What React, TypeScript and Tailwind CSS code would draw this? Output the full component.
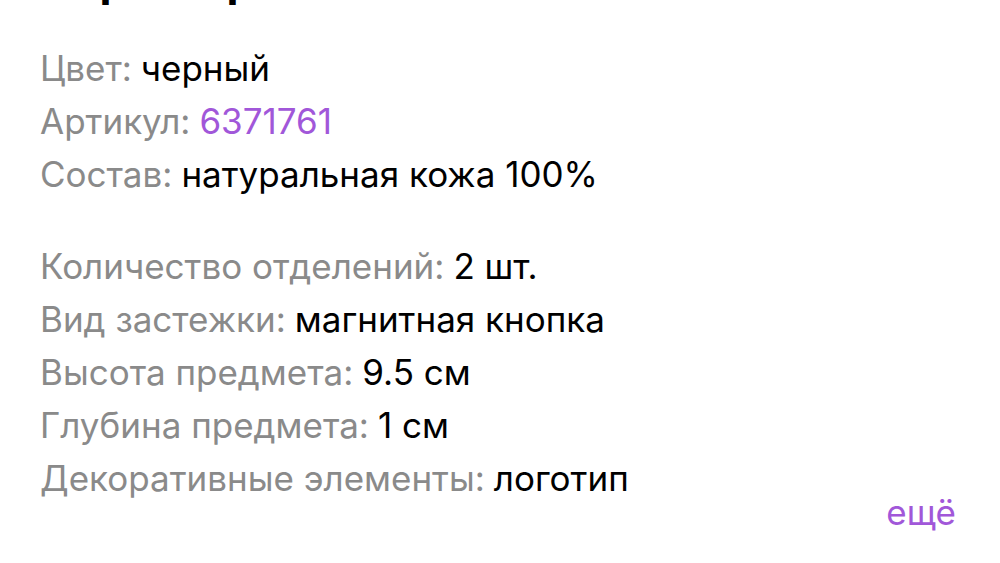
import React from "react";

const rows1: [string, string, boolean?][] = [
  ["Цвет:", "черный"],
  ["Артикул:", "6371761", true],
  ["Состав:", "натуральная кожа 100%"],
];
const rows2: [string, string][] = [
  ["Количество отделений:", "2 шт."],
  ["Вид застежки:", "магнитная кнопка"],
  ["Высота предмета:", "9.5 см"],
  ["Глубина предмета:", "1 см"],
  ["Декоративные элементы:", "логотип"],
];

function Row({ label, value, link }: { label: string; value: string; link?: boolean }) {
  return (
    <div className="h-[53px] flex items-center whitespace-nowrap">
      <span className="text-[#8a8a8a]">{label}</span>
      <span className={link ? "ml-[9px] text-[#a157d9]" : "ml-[9px] text-black"}>{value}</span>
    </div>
  );
}

export default function App() {
  return (
    <div
      className="w-[1000px] h-[563px] bg-white overflow-hidden relative"
      style={{ fontFamily: "Inter, 'Noto Sans', sans-serif" }}
    >
      <div className="h-[5px] overflow-hidden relative">
        <div className="absolute left-[44px] bottom-0 text-[44px] font-bold text-black leading-none whitespace-nowrap">
          Характеристики
        </div>
      </div>
      <div className="pl-[40px] pt-[37px] text-[35px]">
        {rows1.map(([l, v, link]) => (
          <Row key={l} label={l} value={v} link={link} />
        ))}
        <div className="h-[39px]" />
        {rows2.map(([l, v]) => (
          <Row key={l} label={l} value={v} />
        ))}
        <div className="flex justify-end pr-[44px] -mt-[19px]">
          <span className="text-[#a157d9]">ещё</span>
        </div>
      </div>
    </div>
  );
}
